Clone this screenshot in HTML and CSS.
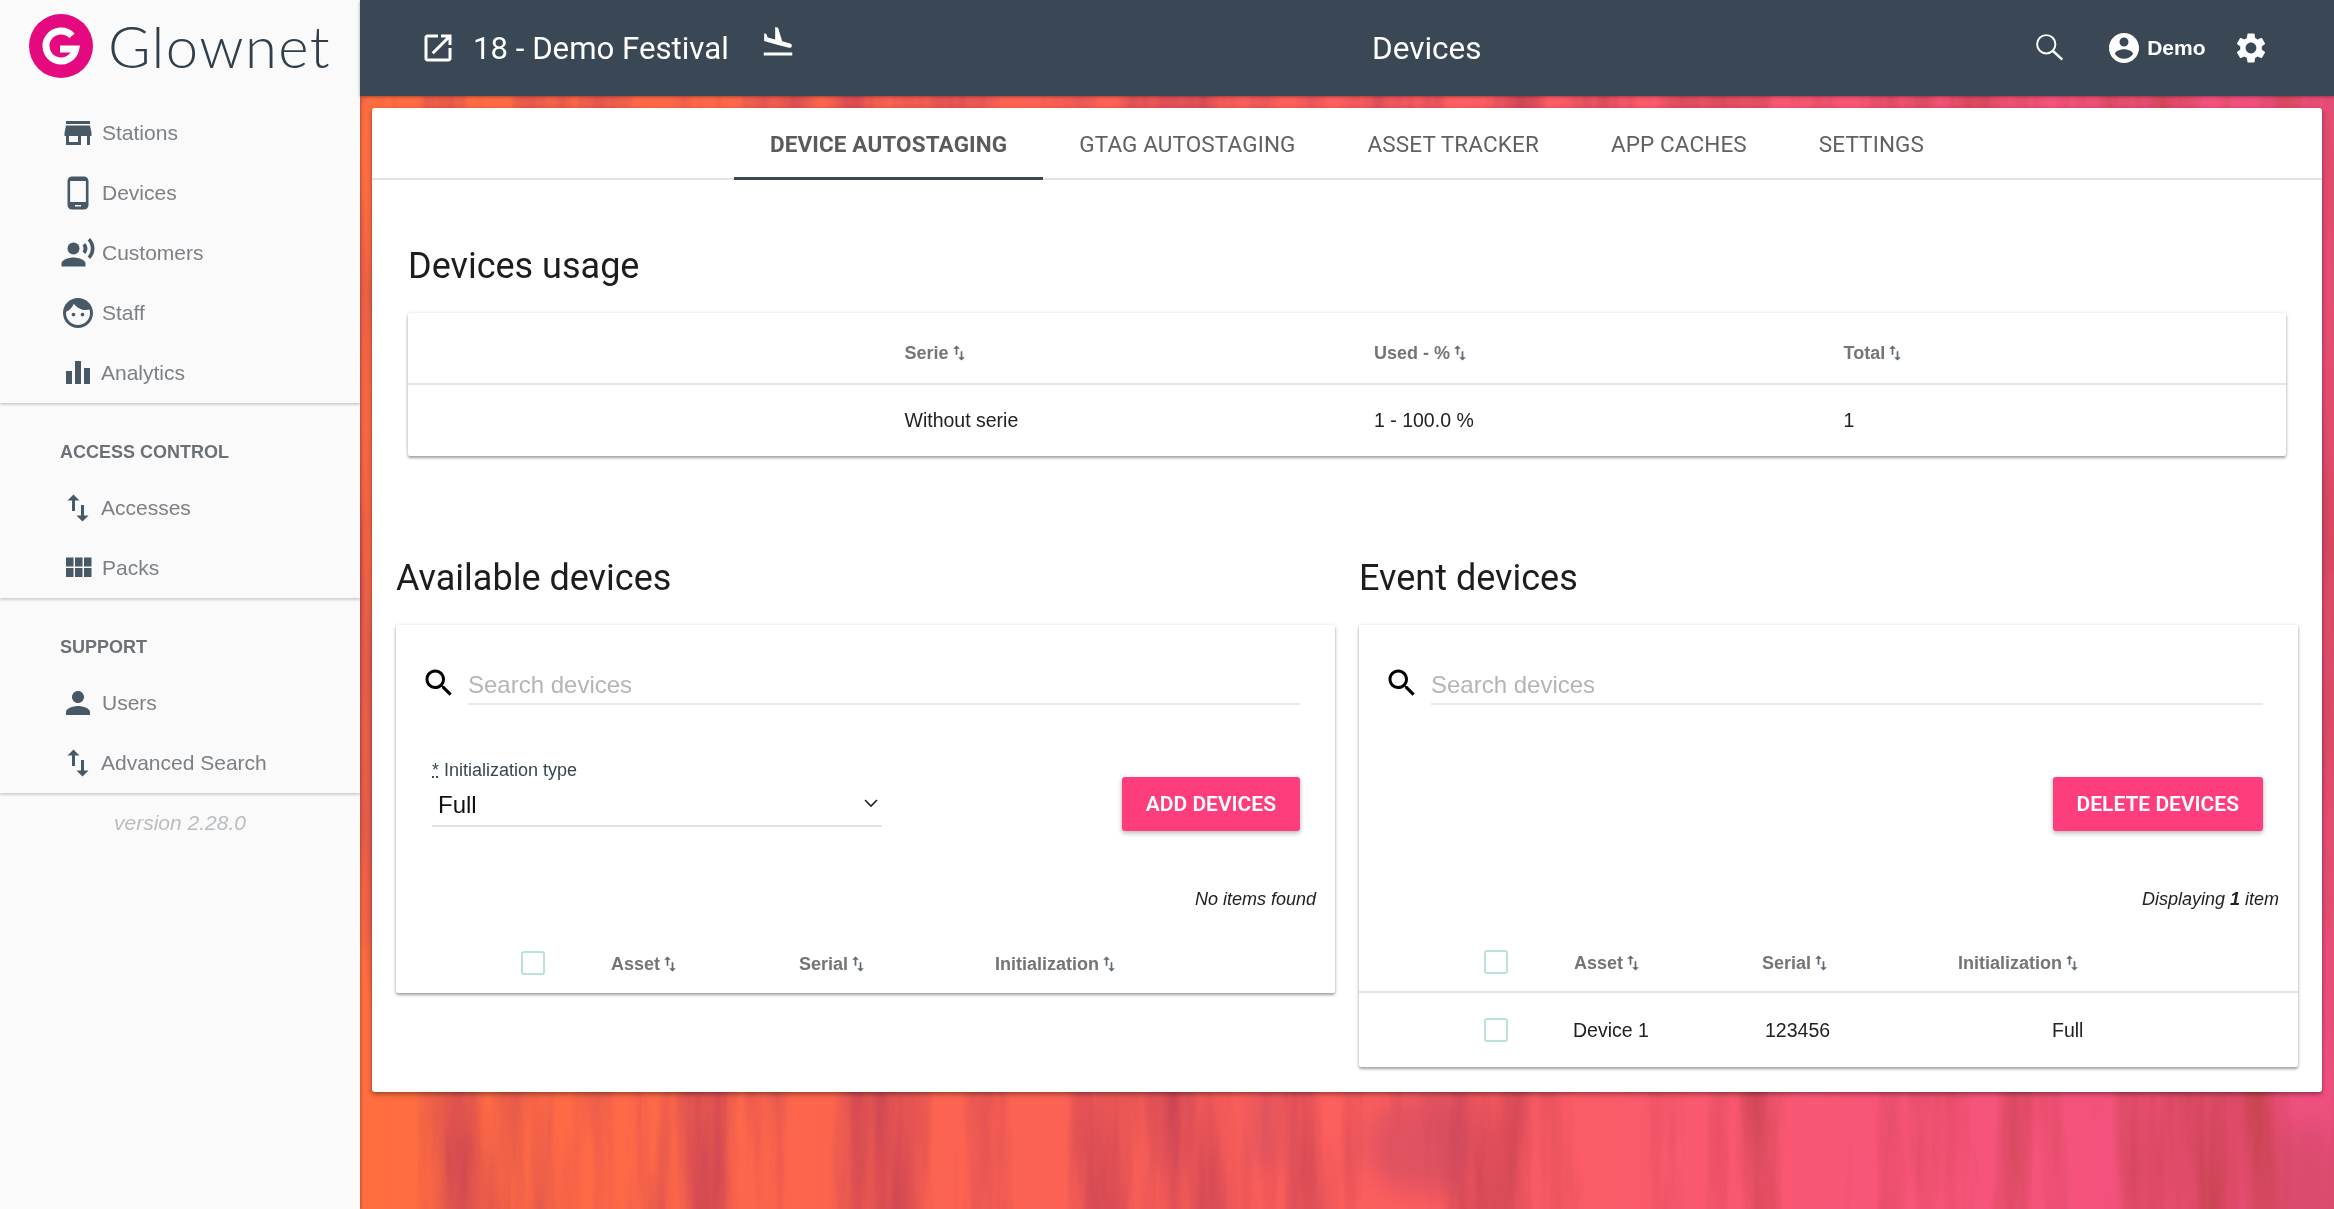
FILE: index.html
```html
<!DOCTYPE html>
<html lang="en">
<head>
    <meta charset="UTF-8">
    <title>Glownet - Devices</title>
    <link rel="stylesheet" href="styles.css">
</head>
<body>
    <!-- blurred festival photo behind the content -->
    <svg class="backdrop" viewBox="0 0 2334 1209" preserveAspectRatio="none" aria-hidden="true">
        <defs>
            <linearGradient id="wash" x1="0" y1="0" x2="1" y2="0">
                <stop offset="0.15" stop-color="#ff6e3e"/>
                <stop offset="0.4" stop-color="#fc6350"/>
                <stop offset="0.62" stop-color="#fd5e60"/>
                <stop offset="0.8" stop-color="#f95578"/>
                <stop offset="1" stop-color="#ef4f80"/>
            </linearGradient>
            <filter id="streaks" x="0" y="0" width="100%" height="100%" color-interpolation-filters="sRGB">
                <feTurbulence type="fractalNoise" baseFrequency="0.022 0.0022" numOctaves="5" seed="11"/>
                <feColorMatrix type="matrix" values="0 0 0 0 0.8  0 0 0 0 0.27  0 0 0 0 0.33  2 0 0 0 -0.78"/>
            </filter>
            <filter id="soft"><feGaussianBlur stdDeviation="14"/></filter>
        </defs>
        <rect width="2334" height="1209" fill="url(#wash)"/>
        <rect width="2334" height="1209" filter="url(#streaks)"/>
        <g filter="url(#soft)" fill="#c94a62" opacity="0.55">
            <ellipse cx="1420" cy="1145" rx="55" ry="50"/>
            <rect x="1250" y="1090" width="26" height="80"/>
            <ellipse cx="2310" cy="1180" rx="30" ry="60"/>
        </g>
    </svg>

    <svg class="sprite" aria-hidden="true">
        <symbol id="i-sort" viewBox="0 0 24 24"><path d="M9 3L5 6.99h3V14h2V6.99h3L9 3zm7 14.01V10h-2v7.01h-3L15 21l4-3.99h-3z"/></symbol>
        <symbol id="i-search" viewBox="0 0 24 24"><path d="M15.5 14h-.79l-.28-.27C15.41 12.59 16 11.11 16 9.5 16 5.91 13.09 3 9.5 3S3 5.91 3 9.5 5.91 16 9.5 16c1.61 0 3.09-.59 4.23-1.57l.27.28v.79l5 4.99L20.49 19l-4.99-5zm-6 0C7.01 14 5 11.99 5 9.5S7.01 5 9.5 5 14 7.01 14 9.5 11.99 14 9.5 14z"/></symbol>
    </svg>

    <aside class="sidebar">
        <div class="logo">
            <svg class="logo-mark" viewBox="0 0 64 64">
                <circle cx="32" cy="32" r="32" fill="#e5097f"/>
                <path d="M31 35H46.7A15 15 0 1 1 43 21.8" fill="none" stroke="#fff" stroke-width="7"/>
            </svg>
            <span class="logo-text">Glownet</span>
        </div>

        <nav class="nav-group first">
            <a class="nav-item"><svg viewBox="0 0 24 24"><path d="M20 4H4v2h16V4zm1 10v-2l-1-5H4l-1 5v2h1v6h10v-6h4v6h2v-6h1zm-9 4H6v-4h6v4z"/></svg>Stations</a>
            <a class="nav-item"><svg viewBox="0 0 24 24"><path d="M16 1H8C6.34 1 5 2.34 5 4v16c0 1.66 1.34 3 3 3h8c1.66 0 3-1.34 3-3V4c0-1.66-1.34-3-3-3zm-2 20h-4v-1h4v1zm3.25-3H6.75V4h10.5v14z"/></svg>Devices</a>
            <a class="nav-item"><svg viewBox="0 0 24 24"><circle cx="9" cy="9" r="4"/><path d="M9 15c-2.67 0-8 1.34-8 4v2h16v-2c0-2.66-5.33-4-8-4zm7.76-9.64l-1.68 1.69c.84 1.18.84 2.71 0 3.89l1.68 1.69c2.02-2.02 2.02-5.07 0-7.27zM20.07 2l-1.63 1.63c2.77 3.02 2.77 7.56 0 10.74L20.07 16c3.9-3.89 3.91-9.95 0-14z"/></svg>Customers</a>
            <a class="nav-item"><svg viewBox="0 0 24 24"><path d="M9 11.75c-.69 0-1.25.56-1.25 1.25s.56 1.25 1.25 1.25 1.25-.56 1.25-1.25-.56-1.25-1.25-1.25zm6 0c-.69 0-1.25.56-1.25 1.25s.56 1.25 1.25 1.25 1.25-.56 1.25-1.25-.56-1.25-1.25-1.25zM12 2C6.48 2 2 6.48 2 12s4.48 10 10 10 10-4.48 10-10S17.52 2 12 2zm0 18c-4.41 0-8-3.59-8-8 0-.29.02-.58.05-.86 2.36-1.05 4.23-2.98 5.21-5.37C11.07 8.33 14.05 10 17.42 10c.78 0 1.53-.09 2.25-.26.21.71.33 1.47.33 2.26 0 4.41-3.59 8-8 8z"/></svg>Staff</a>
            <a class="nav-item tight"><svg viewBox="0 0 24 24"><path d="M4 10.7h4v8.6H4zM10 4h4v15.3h-4zM16 8.7h4v10.6h-4z"/></svg>Analytics</a>
        </nav>

        <nav class="nav-group">
            <h4 class="nav-title">ACCESS CONTROL</h4>
            <a class="nav-item tight"><svg><use href="#i-sort"/></svg>Accesses</a>
            <a class="nav-item"><svg viewBox="0 0 24 24"><path d="M4 11h5V5H4v6zm0 7h5v-6H4v6zm6 0h5v-6h-5v6zm6 0h5v-6h-5v6zm-6-7h5V5h-5v6zm6-6v6h5V5h-5z"/></svg>Packs</a>
        </nav>

        <nav class="nav-group">
            <h4 class="nav-title">SUPPORT</h4>
            <a class="nav-item"><svg viewBox="0 0 24 24"><path d="M12 12c2.21 0 4-1.79 4-4s-1.79-4-4-4-4 1.79-4 4 1.79 4 4 4zm0 2c-2.67 0-8 1.34-8 4v2h16v-2c0-2.66-5.33-4-8-4z"/></svg>Users</a>
            <a class="nav-item tight"><svg><use href="#i-sort"/></svg>Advanced Search</a>
        </nav>

        <p class="version">version 2.28.0</p>
    </aside>

    <main class="main">
        <header class="topbar">
            <div class="topbar-left">
                <svg class="top-icon" viewBox="0 0 24 24"><path d="M19 19H5V5h7V3H5c-1.11 0-2 .9-2 2v14c0 1.1.89 2 2 2h14c1.1 0 2-.9 2-2v-7h-2v7zM14 3v2h3.59l-9.83 9.83 1.41 1.41L19 6.41V10h2V3h-7z"/></svg>
                <span class="event-name">18 - Demo Festival</span>
                <svg class="top-icon land" viewBox="0 0 24 24"><path d="M2.5 19h19v2h-19zm7.18-5.73l4.35 1.16 5.31 1.42c.8.21 1.62-.26 1.84-1.06.21-.8-.26-1.62-1.06-1.84l-5.31-1.42-2.76-9.02L10.12 2v8.28L5.15 8.95l-.93-2.32-1.45-.39v5.17l1.6.43 5.31 1.43z"/></svg>
            </div>
            <div class="page-title">Devices</div>
            <div class="topbar-right">
                <svg class="top-icon search" viewBox="0 0 24 24"><circle cx="9.5" cy="9.5" r="6.1" fill="none" stroke="#fff" stroke-width="1.3"/><path d="M14 14l6.2 5.8" fill="none" stroke="#fff" stroke-width="1.6"/></svg>
                <svg class="top-icon user" viewBox="0 0 24 24"><path d="M12 2C6.48 2 2 6.48 2 12s4.48 10 10 10 10-4.48 10-10S17.52 2 12 2zm0 3c1.66 0 3 1.34 3 3s-1.34 3-3 3-3-1.34-3-3 1.34-3 3-3zm0 14.2c-2.5 0-4.71-1.28-6-3.22.03-1.99 4-3.08 6-3.08 1.99 0 5.97 1.09 6 3.08-1.29 1.94-3.5 3.22-6 3.22z"/></svg>
                <span class="user-name">Demo</span>
                <svg class="top-icon gear" viewBox="0 0 24 24"><path d="M19.14 12.94c.04-.3.06-.61.06-.94 0-.32-.02-.64-.07-.94l2.03-1.58c.18-.14.23-.41.12-.61l-1.92-3.32c-.12-.22-.37-.29-.59-.22l-2.39.96c-.5-.38-1.03-.7-1.62-.94l-.36-2.54c-.04-.24-.24-.41-.48-.41h-3.84c-.24 0-.43.17-.47.41l-.36 2.54c-.59.24-1.13.57-1.62.94l-2.39-.96c-.22-.08-.47 0-.59.22L2.74 8.87c-.12.21-.08.47.12.61l2.03 1.58c-.05.3-.09.63-.09.94s.02.64.07.94l-2.03 1.58c-.18.14-.23.41-.12.61l1.92 3.32c.12.22.37.29.59.22l2.39-.96c.5.38 1.03.7 1.62.94l.36 2.54c.05.24.24.41.48.41h3.84c.24 0 .44-.17.47-.41l.36-2.54c.59-.24 1.13-.56 1.62-.94l2.39.96c.22.08.47 0 .59-.22l1.92-3.32c.12-.22.07-.47-.12-.61l-2.01-1.58zM12 15.6c-1.98 0-3.6-1.62-3.6-3.6s1.62-3.6 3.6-3.6 3.6 1.62 3.6 3.6-1.62 3.6-3.6 3.6z"/></svg>
            </div>
        </header>

        <section class="panel">
            <div class="tabs">
                <a class="tab active">DEVICE AUTOSTAGING</a>
                <a class="tab">GTAG AUTOSTAGING</a>
                <a class="tab">ASSET TRACKER</a>
                <a class="tab">APP CACHES</a>
                <a class="tab">SETTINGS</a>
            </div>

            <div class="usage">
                <h2 class="heading">Devices usage</h2>
                <div class="card usage-table">
                    <div class="usage-row head">
                        <span></span>
                        <span class="th">Serie <svg class="sort"><use href="#i-sort"/></svg></span>
                        <span class="th">Used - % <svg class="sort"><use href="#i-sort"/></svg></span>
                        <span class="th">Total <svg class="sort"><use href="#i-sort"/></svg></span>
                    </div>
                    <div class="usage-row">
                        <span></span>
                        <span>Without serie</span>
                        <span>1 - 100.0 %</span>
                        <span>1</span>
                    </div>
                </div>
            </div>

            <div class="columns">
                <div>
                    <h2 class="heading">Available devices</h2>
                    <div class="card">
                        <div class="search-row">
                            <svg class="search-icon"><use href="#i-search"/></svg>
                            <input class="search-input" type="text" placeholder="Search devices">
                        </div>
                        <div class="action-row">
                            <div class="field">
                                <label class="field-label"><abbr title="required">*</abbr> Initialization type</label>
                                <div class="select-wrap">
                                    <select class="select"><option>Full</option></select>
                                    <svg class="chevron" viewBox="0 0 16 16"><path d="M2 5l6 6 6-6" fill="none" stroke="#222" stroke-width="1.6"/></svg>
                                </div>
                            </div>
                            <button class="btn">ADD DEVICES</button>
                        </div>
                        <p class="info"><em>No items found</em></p>
                        <div class="device-row head flat">
                            <input class="check" type="checkbox">
                            <span class="th">Asset <svg class="sort"><use href="#i-sort"/></svg></span>
                            <span class="th">Serial <svg class="sort"><use href="#i-sort"/></svg></span>
                            <span class="th">Initialization <svg class="sort"><use href="#i-sort"/></svg></span>
                        </div>
                    </div>
                </div>

                <div>
                    <h2 class="heading">Event devices</h2>
                    <div class="card">
                        <div class="search-row">
                            <svg class="search-icon"><use href="#i-search"/></svg>
                            <input class="search-input" type="text" placeholder="Search devices">
                        </div>
                        <div class="action-row end">
                            <button class="btn">DELETE DEVICES</button>
                        </div>
                        <p class="info"><em>Displaying <b>1</b> item</em></p>
                        <div class="device-row head">
                            <input class="check" type="checkbox">
                            <span class="th">Asset <svg class="sort"><use href="#i-sort"/></svg></span>
                            <span class="th">Serial <svg class="sort"><use href="#i-sort"/></svg></span>
                            <span class="th">Initialization <svg class="sort"><use href="#i-sort"/></svg></span>
                        </div>
                        <div class="device-row item">
                            <input class="check" type="checkbox">
                            <span>Device 1</span>
                            <span class="serial">123456</span>
                            <span class="init">Full</span>
                        </div>
                    </div>
                </div>
            </div>
        </section>
    </main>
</body>
</html>
```

FILE: styles.css
```css
* {
    margin: 0;
    padding: 0;
    box-sizing: border-box;
}

html, body {
    height: 100%;
    overflow: hidden;
}

body {
    display: flex;
    font-family: "Liberation Sans", Arial, sans-serif;
    color: #212121;
    background: #f9604c;
}

.backdrop {
    position: fixed;
    left: 0;
    top: 0;
    width: 100%;
    height: 100%;
    z-index: -1;
}

.sprite {
    display: none;
}

/* sidebar */
.sidebar {
    width: 360px;
    flex: none;
    background: #fafafa;
    box-shadow: 1px 0 3px rgba(0,0,0,0.25);
}

.logo {
    height: 96px;
    padding: 14px 0 0 29px;
    display: flex;
    align-items: flex-start;
}

.logo-mark {
    width: 64px;
    height: 64px;
    flex: none;
}

.logo-text {
    margin-left: 15px;
    font-family: "Lato", sans-serif;
    font-weight: 300;
    font-size: 58px;
    line-height: 64px;
    letter-spacing: 1.4px;
    color: #2f3f4c;
}

.nav-group {
    box-shadow: 0 2px 2px rgba(0,0,0,0.16);
}

.nav-group.first {
    padding-top: 7px;
}

.nav-title {
    height: 75px;
    padding: 37px 0 0 60px;
    font-size: 18px;
    line-height: 24px;
    font-weight: bold;
    color: #6b7176;
}

.nav-item {
    display: flex;
    align-items: center;
    height: 60px;
    padding-left: 60px;
    font-size: 21px;
    color: #7b8186;
}

.nav-item svg {
    width: 36px;
    height: 36px;
    margin-right: 6px;
    flex: none;
    fill: #475866;
}

.nav-item.tight svg {
    margin-right: 5px;
}

.version {
    margin-top: 18px;
    text-align: center;
    font-style: italic;
    font-size: 21px;
    line-height: 24px;
    color: #b9bdc0;
}

/* main area */
.main {
    flex: 1;
    min-width: 0;
}

.topbar {
    height: 96px;
    background: #394854;
    box-shadow: 0 1px 3px rgba(0,0,0,0.35);
    color: #fff;
    display: grid;
    grid-template-columns: 952px auto 1fr;
    align-items: center;
    padding: 0 65.5px 0 60px;
}

.topbar-left,
.topbar-right {
    display: flex;
    align-items: center;
}

.topbar-right {
    justify-content: flex-end;
}

.top-icon {
    width: 36px;
    height: 36px;
    fill: #fff;
    flex: none;
}

.event-name {
    margin-left: 17px;
    font-family: Roboto, sans-serif;
    font-size: 31.2px;
}

.land {
    margin: -12px 0 0 31px;
}

.page-title {
    font-family: Roboto, sans-serif;
    font-weight: 400;
    font-size: 31.5px;
}

.search {
    margin-right: 37.5px;
}

.user-name {
    margin: 0 27px 0 1px;
    font-size: 21px;
    font-weight: bold;
}

.user {
    margin-right: 4.5px;
}

/* white panel */
.panel {
    margin: 12px;
    height: 984px;
    background: #fff;
    border-radius: 3px;
    box-shadow: 0 2px 5px rgba(0,0,0,0.4);
}

.tabs {
    height: 72px;
    display: flex;
    justify-content: center;
    border-bottom: 2px solid #e4e4e4;
}

.tab {
    height: 72px;
    padding: 2px 36px 0;
    display: flex;
    align-items: center;
    font-family: Roboto, sans-serif;
    font-size: 22.5px;
    letter-spacing: 0.12px;
    color: #616161;
    border-bottom: 3px solid transparent;
}

.tab.active {
    font-weight: 700;
    color: #5b5b5b;
    border-bottom-color: #394854;
}

.heading {
    font-family: Roboto, sans-serif;
    font-weight: 400;
    font-size: 36px;
    line-height: 46px;
    margin-bottom: 24px;
    color: #1d1d1d;
}

.usage {
    padding: 63px 36px 0;
}

.card {
    background: #fff;
    box-shadow: 0 2px 3px rgba(0,0,0,0.35), 0 0 4px rgba(0,0,0,0.1);
    border-radius: 2px;
}

.usage-row {
    display: grid;
    grid-template-columns: repeat(4, 1fr);
    align-items: center;
    height: 71px;
    font-size: 19.5px;
}

.usage-row span {
    padding-left: 27px;
}

.usage-row.head {
    height: 72px;
    padding-top: 10px;
    border-bottom: 2px solid #e6e6e6;
}

.th {
    font-size: 18px;
    font-weight: bold;
    color: #757575;
    display: flex;
    align-items: center;
}

.sort {
    width: 20px;
    height: 20px;
    fill: #5f6b75;
}

.columns {
    display: grid;
    grid-template-columns: 1fr 1fr;
    gap: 24px;
    align-items: start;
    padding: 99px 24px 0;
}

.search-row {
    display: flex;
    align-items: center;
    padding: 36px 35px 0 24.5px;
}

.search-icon {
    width: 36px;
    height: 36px;
    margin-right: 11.5px;
    flex: none;
    fill: #000;
}

.search-input {
    flex: 1;
    height: 44px;
    padding-top: 6px;
    border: none;
    border-bottom: 2px solid #e8e8e8;
    outline: none;
    font-family: inherit;
    font-size: 24px;
    color: #212121;
    background: none;
}

.search-input::placeholder {
    color: #b5b5b5;
    opacity: 1;
}

.action-row {
    height: 76px;
    margin-top: 50px;
    padding: 0 35px 0 36px;
    display: flex;
    align-items: flex-end;
    justify-content: space-between;
}

.action-row.end {
    justify-content: flex-end;
}

.field {
    width: 450px;
    margin-bottom: 4px;
}

.field-label {
    display: block;
    padding-top: 2px;
    font-size: 18px;
    line-height: 22px;
    color: #37474f;
}

.select-wrap {
    position: relative;
    border-bottom: 2px solid #e4e4e4;
}

.select {
    display: block;
    width: 100%;
    height: 44px;
    padding: 2px 0 0 6px;
    border: none;
    outline: none;
    appearance: none;
    background: none;
    font-family: inherit;
    font-size: 24px;
    color: #111;
}

.chevron {
    position: absolute;
    right: 3px;
    top: 14px;
    width: 16px;
    height: 16px;
}

.btn {
    height: 54px;
    padding: 0 24px;
    border: none;
    border-radius: 3px;
    background: #fe3d7d;
    color: #fff;
    font-family: Roboto, sans-serif;
    font-weight: 600;
    font-size: 21px;
    box-shadow: 0 2px 5px rgba(0,0,0,0.3);
}

.info {
    margin-top: 57px;
    padding-right: 19px;
    text-align: right;
    font-size: 18px;
    line-height: 22px;
}

.device-row {
    display: grid;
    grid-template-columns: 214px 188px 196px 1fr;
    align-items: center;
    margin-top: 23px;
    height: 60px;
    border-bottom: 2px solid #e4e4e4;
}

.device-row .th {
    padding: 2px 0 0 1px;
}

.device-row.flat {
    border-bottom: none;
}

.device-row.item {
    margin-top: 0;
    height: 74px;
    border-bottom: none;
    font-size: 19.5px;
}

.check {
    width: 24px;
    height: 24px;
    margin-left: 125px;
    appearance: none;
    border: 2px solid #b9e2da;
    border-radius: 3px;
    background: #fff;
}

.serial {
    padding-left: 4px;
}

.init {
    padding-left: 95px;
}
```
